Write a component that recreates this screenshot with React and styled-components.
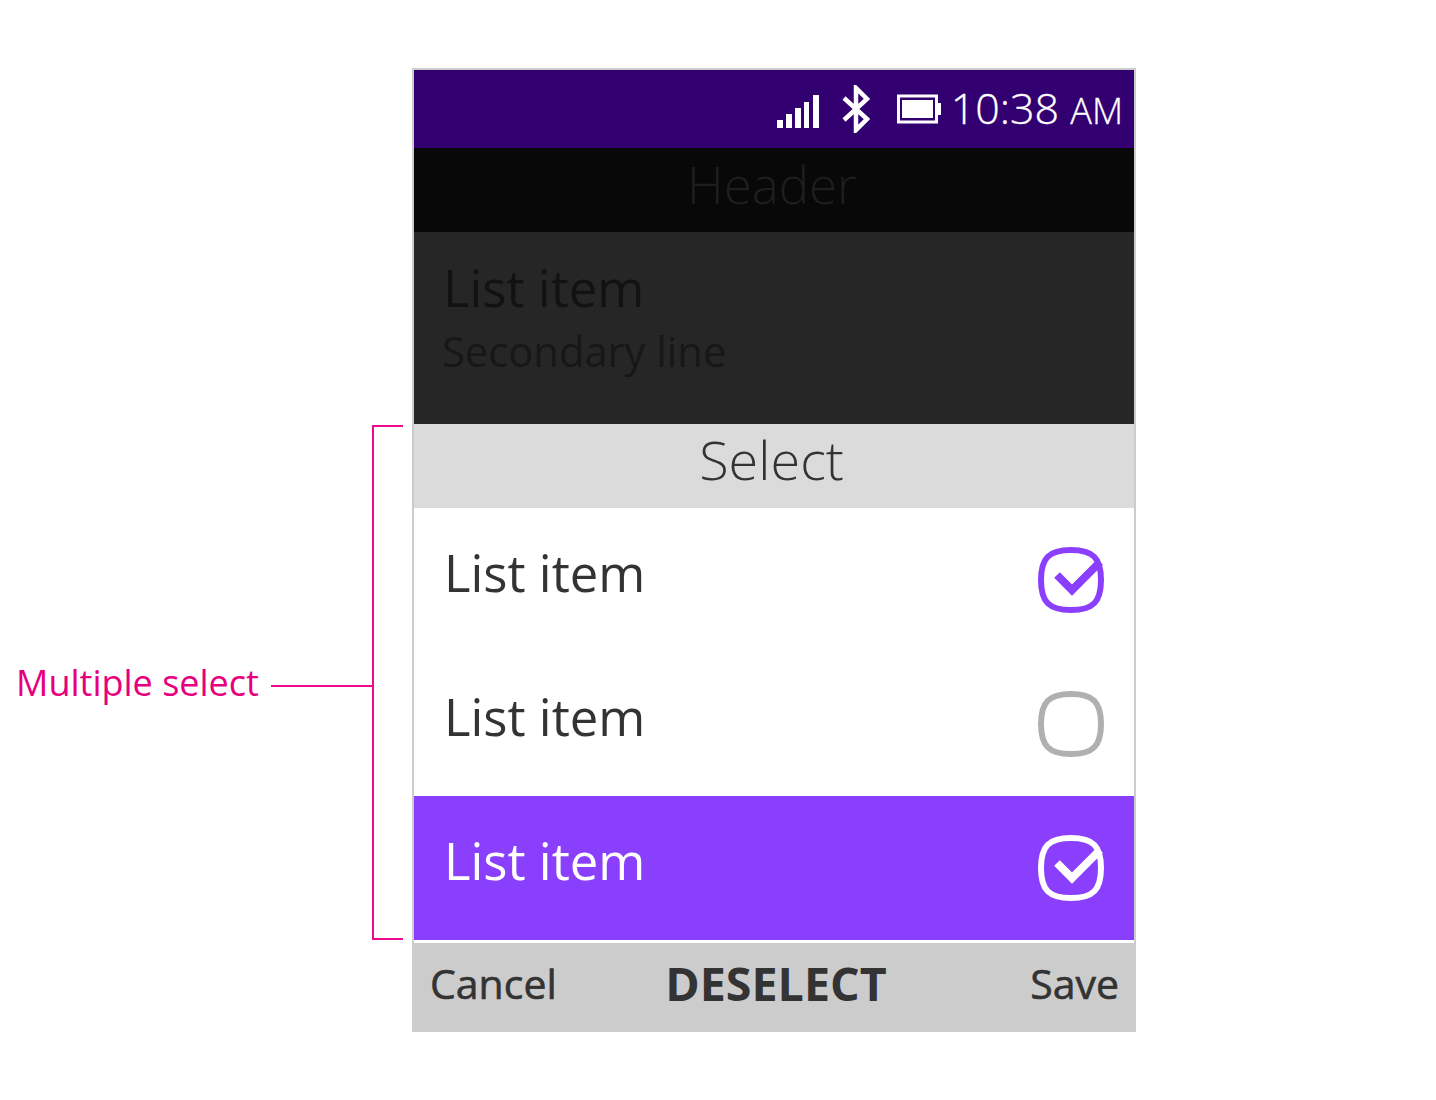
import React from 'react'
import styled, { createGlobalStyle } from "styled-components";

const GlobalStyle = createGlobalStyle`
  html, body {
    margin: 0;
    padding: 0;
    background: #fff;
    font-family: "Open Sans", "Noto Sans", sans-serif;
  }
`;

function Signal() {
  return (
    <SignalSvg viewBox="0 0 42 34" width="42" height="34">
      <path fill="#fff" d="M0 25h6v8H0zM9 19h6v14H9zM18 13h6v20h-6zM27 7h5v26h-5zM36 0h6v33h-6z" />
    </SignalSvg>
  );
}

function Bluetooth() {
  return (
    <BluetoothSvg viewBox="0 0 28 48" width="28" height="48">
      <path fill="none" stroke="#fff" strokeWidth="4.5" d="M2 13l23 21-11 11V3l11 11L2 35" />
    </BluetoothSvg>
  );
}

function Battery() {
  return (
    <BatterySvg viewBox="0 0 46 30" width="46" height="30">
      <path fill="none" stroke="#fff" strokeWidth="3" d="M2.5 2h38v26h-38z" />
      <rect x="6" y="6" width="31" height="18" fill="#fff" />
      <rect x="42" y="9" width="3" height="12" fill="#fff" />
    </BatterySvg>
  );
}

function CheckBox({ color, checked }) {
  return (
    <svg viewBox="0 0 66 66" width="66" height="66">
      <path
        fill="none"
        stroke={color}
        strokeWidth="6"
        d="M33 3C55 3 63 11 63 33C63 55 55 63 33 63C11 63 3 55 3 33C3 11 11 3 33 3Z"
      />
      {checked && (
        <path fill="none" stroke={color} strokeWidth="8" d="M19 28L34 43L62 15" />
      )}
    </svg>
  );
}

export default function App() {
  return (
    <Page>
      <GlobalStyle />
      <Annotation>
        <AnnotationLabel>Multiple select</AnnotationLabel>
        <AnnotationLine />
        <Bracket />
      </Annotation>
      <Phone>
        <StatusBar>
          <Signal />
          <Bluetooth />
          <Battery />
          <Clock>10:38 <small>AM</small></Clock>
        </StatusBar>
        <Header>Header</Header>
        <DimItem>
          <DimPrimary>List item</DimPrimary>
          <DimSecondary>Secondary line</DimSecondary>
        </DimItem>
        <SelectTitle>Select</SelectTitle>
        <Row>
          <span>List item</span>
          <CheckBox color="#8a3ffc" checked />
        </Row>
        <Row>
          <span>List item</span>
          <CheckBox color="#b0b0b0" />
        </Row>
        <Row $focused>
          <span>List item</span>
          <CheckBox color="#fff" checked />
        </Row>
        <SoftKeys>
          <SoftKey>Cancel</SoftKey>
          <CenterKey>DESELECT</CenterKey>
          <SoftKey $right>Save</SoftKey>
        </SoftKeys>
      </Phone>
    </Page>
  );
}

const Page = styled.div`
  display: flex;
  align-items: flex-start;
  width: 1436px;
  height: 1100px;
  box-sizing: border-box;
  padding: 68px 0 0 16px;
`;

const Annotation = styled.div`
  display: flex;
  align-items: center;
  width: 387px;
  height: 515px;
  margin: 357px 9px 0 0;
`;

const AnnotationLabel = styled.div`
  color: #e6007e;
  font-size: 36px;
  line-height: 40px;
  white-space: nowrap;
  margin-right: 12px;
`;

const AnnotationLine = styled.div`
  flex: 1;
  height: 2px;
  margin-top: 6px;
  background: #ee0a8f;
`;

const Bracket = styled.div`
  align-self: stretch;
  width: 29px;
  border: 2px solid #ee0a8f;
  border-right: 0;
`;

const Phone = styled.div`
  width: 724px;
  height: 964px;
  box-sizing: border-box;
  border: solid #cccccc;
  border-width: 2px 2px 0;
  display: flex;
  flex-direction: column;
`;

const StatusBar = styled.div`
  height: 78px;
  background: #330072;
  display: flex;
  align-items: center;
  justify-content: flex-end;
  padding-right: 11px;
  color: #fff;
`;

const SignalSvg = styled.svg`
  margin: 6px 23px 0 0;
`;

const BluetoothSvg = styled.svg`
  margin: 0 26px 0 0;
`;

const BatterySvg = styled.svg`
  margin: 0 9px 0 0;
`;

const Clock = styled.div`
  font-size: 43px;
  font-weight: 300;
  -webkit-text-stroke: 0.3px #fff;
  line-height: 78px;
  small {
    font-size: 36px;
  }
`;

const Header = styled.div`
  height: 84px;
  background: #080808;
  color: #1e1e1e;
  font-size: 51px;
  font-weight: 300;
  line-height: 72px;
  text-align: center;
  padding-right: 4px;
`;

const DimItem = styled.div`
  height: 192px;
  background: #262626;
  padding: 22px 0 0 29px;
  box-sizing: border-box;
`;

const DimPrimary = styled.div`
  color: #121212;
  font-size: 50.8px;
  line-height: 68px;
`;

const DimSecondary = styled.div`
  color: #171717;
  font-size: 41.7px;
  line-height: 58px;
  margin-left: -1px;
`;

const SelectTitle = styled.div`
  height: 84px;
  background: #dbdbdb;
  color: #333;
  font-size: 54px;
  font-weight: 300;
  line-height: 70px;
  text-align: center;
  padding-right: 5px;
`;

const Row = styled.div`
  height: 144px;
  box-sizing: border-box;
  display: flex;
  justify-content: space-between;
  align-items: center;
  padding: 0 30px 0 30px;
  background: ${(props) => (props.$focused ? "#8a3ffc" : "#fff")};
  color: ${(props) => (props.$focused ? "#fff" : "#333")};
  font-size: 50.8px;
  span {
    margin-bottom: 15px;
  }
`;

const SoftKeys = styled.div`
  margin: 3px -2px 0;
  height: 89px;
  background: #cccccc;
  display: grid;
  grid-template-columns: 1fr auto 1fr;
  align-items: center;
  padding: 0 17px 10px 18px;
  box-sizing: border-box;
  color: #333;
`;

const SoftKey = styled.div`
  font-size: 41px;
  -webkit-text-stroke: 0.6px #333;
  text-align: ${(props) => (props.$right ? "right" : "left")};
`;

const CenterKey = styled.div`
  font-size: 46.6px;
  font-weight: 700;
  padding-left: 3px;
`;
